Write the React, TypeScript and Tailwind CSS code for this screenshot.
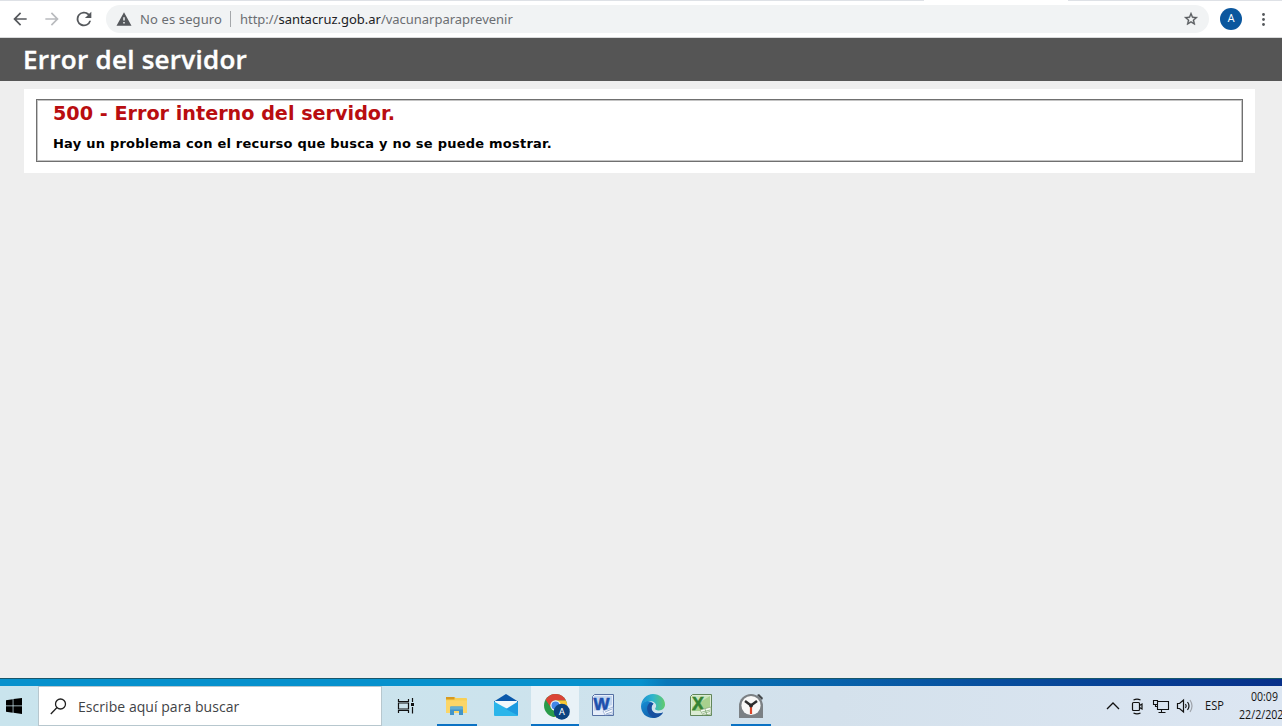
import type { ReactNode } from 'react'

function BrowserToolbar() {
  return (
    <div className="flex h-[38px] shrink-0 flex-col border-b border-[#d9dadb] bg-white">
      {/* Bottom edge of the tab strip, open under the active tab */}
      <div className="flex h-px shrink-0 justify-between">
        <div className="w-[924px] bg-[#dee1e6]" />
        <div className="w-[214px] bg-[#dee1e6]" />
      </div>
      <div className="flex h-9 items-center">
        <svg className="ml-[10px] size-5 shrink-0" viewBox="0 0 24 24" fill="#55585c">
          <path d="M20 11H7.8l5.6-5.6L12 4l-8 8 8 8 1.4-1.4L7.8 13H20z" />
        </svg>
        <svg className="ml-[12px] size-5 shrink-0" viewBox="0 0 24 24" fill="#b9bbbe">
          <path d="M4 11h12.2l-5.6-5.6L12 4l8 8-8 8-1.4-1.4 5.6-5.6H4z" />
        </svg>
        <svg className="ml-[11px] size-[22px] shrink-0" viewBox="0 0 24 24" fill="#55585c">
          <path d="M17.65 6.35A8 8 0 1 0 19.73 14h-2.08A6 6 0 1 1 12 6c1.66 0 3.14.69 4.22 1.78L13 11h7V4z" />
        </svg>
        <div className="ml-[11px] flex h-7 w-[1103px] shrink-0 items-center rounded-full bg-[#f1f3f4] font-['Noto_Sans',sans-serif] text-[13px] text-[#6b6e72]">
          <svg className="ml-[9px] size-[18px]" viewBox="0 0 24 24" fill="#55585c">
            <path d="M2 21h20L12 3zm11-3h-2v-2h2zm0-4h-2V9.5h2z" />
          </svg>
          <span className="ml-[7px] w-[83px] pt-px tracking-[.12px] whitespace-nowrap">No es seguro</span>
          <span className="ml-[7px] h-4 w-px bg-[#a4a7aa]" />
          <span className="ml-[9px] grow pt-px tracking-[-.02px] whitespace-nowrap">
            http://<span className="text-[#202124]">santacruz.gob.ar</span>/vacunarparaprevenir
          </span>
          <svg className="mr-[10px] size-4" viewBox="0 0 24 24" fill="#55585c" stroke="#55585c" strokeWidth=".5">
            <path d="M22 9.24l-7.19-.62L12 2 9.19 8.63 2 9.24l5.46 4.73L5.82 21 12 17.27 18.18 21l-1.63-7.03zM12 15.4l-3.76 2.27 1-4.28-3.32-2.88 4.38-.38L12 6.1l1.71 4.04 4.38.38-3.32 2.88 1 4.28z" />
          </svg>
        </div>
        <div className="ml-[11px] flex size-[22px] shrink-0 items-center justify-center rounded-full bg-[#0b579e] font-[Roboto,sans-serif] text-[11px] text-white">
          A
        </div>
        <svg className="ml-[19px] h-4 w-[5px] shrink-0" viewBox="0 0 5 16" fill="#55585c">
          <circle cx="2.5" cy="3.5" r="1.4" />
          <circle cx="2.5" cy="8.5" r="1.4" />
          <circle cx="2.5" cy="13.5" r="1.4" />
        </svg>
      </div>
    </div>
  )
}

function ErrorPage() {
  return (
    <main className="flex grow flex-col bg-[#eee] font-['DejaVu_Sans',sans-serif]">
      <h1 className="h-[43px] bg-[#555] pl-[23px] font-['Open_Sans',sans-serif] text-[26px] leading-[43px] font-semibold tracking-[.27px] text-white [-webkit-text-stroke:.4px_white]">
        Error del servidor
      </h1>
      <div className="mt-2 ml-6 h-[84px] w-[1231px] bg-white px-3 pt-[10px]">
        <div className="h-[63px] w-[1207px] border border-[#707070] pl-4 shadow-[inset_0_0_0_1px_#c4c4c4]">
          <h2 className="h-[28px] text-[19.2px] leading-[27px] font-bold whitespace-nowrap text-[#b90d10]">
            500 - Error interno del servidor.
          </h2>
          <h3 className="mt-[6px] text-[13px] leading-[20px] font-bold tracking-[.23px] whitespace-nowrap text-black">
            Hay un problema con el recurso que busca y no se puede mostrar.
          </h3>
        </div>
      </div>
    </main>
  )
}

function TaskButton({ open, active, children }: { open?: boolean; active?: boolean; children: ReactNode }) {
  return (
    <div className={`flex h-10 w-12 shrink-0 flex-col items-center ${active ? 'bg-[#e9f2f7]' : ''}`}>
      <div className="flex h-[38px] items-center justify-center">{children}</div>
      {open && <div className={`h-[2px] bg-[#0b72c4] ${active ? 'w-12' : 'w-10'}`} />}
    </div>
  )
}

function ExplorerIcon() {
  return (
    <svg className="mt-[2px] h-[22px] w-6" viewBox="0 0 24 22">
      <path d="M1 3a1 1 0 0 1 1-1h7l2 1h10a1 1 0 0 1 1 1v14H1z" fill="#f8cf55" />
      <path d="M1 2h8.5v2.5H1z" fill="#d89a20" />
      <path d="M1 5.5h21v12.5H1z" fill="#fbd668" />
      <path d="M5 20v-7.5a1 1 0 0 1 1-1h11a1 1 0 0 1 1 1V20h-4v-4H9v4z" fill="#4295c8" />
      <path d="M5 14.5h13v-2a1 1 0 0 0-1-1H6a1 1 0 0 0-1 1z" fill="#62afd4" />
    </svg>
  )
}

function MailIcon() {
  return (
    <svg className="h-[24px] w-[26px]" viewBox="0 0 26 24">
      <path d="M1 8.5L13 1l12 7.5v6H1z" fill="#0a58ab" />
      <path d="M2 8h22v3l-10 6L2 11z" fill="#f3f8fb" />
      <path d="M1 8.5L25 22a1 1 0 0 1-1 1H2a1 1 0 0 1-1-1z" fill="#2bb5ea" />
      <path d="M25 8.5v14L13 16z" fill="#1c9ae0" />
      <path d="M25 22.5L13 15.5l-3-2 .5.3z" fill="#1683d2" />
    </svg>
  )
}

function ChromeIcon() {
  return (
    <svg className="mt-[4px] ml-[3px] h-[28px] w-[28px]" viewBox="0 0 28 28">
      <circle cx="12.5" cy="12.5" r="11.5" fill="#299b4a" />
      <path d="M2.6 6.7A11.5 11.5 0 0 1 23 7.5H12.5a5 5 0 0 0-4.5 7z" fill="#db4437" />
      <path d="M12.5 7.5H23a11.5 11.5 0 0 1-11.5 16.5l5.5-9z" fill="#f8c935" />
      <circle cx="12.5" cy="12.5" r="5.2" fill="#f7f8f8" />
      <circle cx="12.5" cy="12.5" r="4" fill="#4285e8" />
      <circle cx="18.8" cy="18.7" r="8" fill="#0b4380" />
      <text x="18.8" y="22" textAnchor="middle" fontFamily="Roboto, sans-serif" fontSize="9.5" fill="#fff">A</text>
    </svg>
  )
}

function WordIcon() {
  return (
    <svg className="ml-[-2px] size-6" viewBox="0 0 24 24">
      <path d="M3.5 1.5h19v21h-21v-19z" fill="#e6eefa" stroke="#5570a3" />
      <path d="M3 3h18v9L3 18z" fill="#c2d5ef" />
      <text x="2.5" y="17" textLength="16" lengthAdjust="spacingAndGlyphs" fontFamily="Liberation Sans, sans-serif" fontSize="17" fontWeight="700" fill="#1d50ad" stroke="#1d50ad" strokeWidth=".6">W</text>
      <path d="M12 18l10-4v7l-8 1z" fill="#f7faff" stroke="#8ba4ce" strokeWidth=".7" />
      <path d="M14 19l7-3M15 21l6-2" stroke="#6f8fbd" strokeWidth=".7" />
    </svg>
  )
}

function EdgeIcon() {
  return (
    <svg className="mt-px size-[26px]" viewBox="0 0 26 26">
      <defs>
        <linearGradient id="edge-top" x1="0" x2="1">
          <stop offset="0" stopColor="#1b8fd4" />
          <stop offset=".5" stopColor="#2fb5cc" />
          <stop offset="1" stopColor="#62cb6b" />
        </linearGradient>
        <linearGradient id="edge-side" x1="0" x2="1" y1="0" y2="1">
          <stop offset="0" stopColor="#1690d5" />
          <stop offset="1" stopColor="#104d9c" />
        </linearGradient>
      </defs>
      <path d="M1 13c0 7 5 12 12 12 4.5 0 8-2.2 10-5.5-5.5 2.5-11.5.5-11.5-4.5 0-2 .8-3.3 2-4.3C9 6 2 8 1 13z" fill="url(#edge-side)" />
      <path d="M9.5 10C5 14 7 22 14 24.9c4-.3 7.2-2.4 9-5.4-5.5 2.5-11.5.5-11.5-4.5 0-2 .8-3.3 2-4.3-1-.9-2.8-1.2-4-.7z" fill="#174f9f" />
      <path d="M1 13C1.500 6 6.500 1 13 1s12 4.700 12 10.300c0 3.900-2.700 6.200-6 6.200-2.700 0-4.500-.9-3.700-2.200C18.300 11 13 7.200 8.700 8 5 8.600 2 10 1 13z" fill="url(#edge-top)" />
    </svg>
  )
}

function ExcelIcon() {
  return (
    <svg className="ml-[-2px] size-6" viewBox="0 0 24 24">
      <path d="M3.5 1.5h19v21h-21v-19z" fill="#dcecd4" stroke="#61865a" />
      <path d="M3 3h18v15H3z" fill="#a8d08e" />
      <path d="M3 3h18L3 14z" fill="#cbe5bc" />
      <text x="3" y="17" fontFamily="Liberation Sans, sans-serif" fontSize="18" fontWeight="700" fill="#348334" stroke="#348334" strokeWidth=".5">X</text>
      <path d="M11 17l11-3v7l-8 1z" fill="#f8fcf5" stroke="#85a578" strokeWidth=".7" />
      <path d="M13 19l8-2M14 20.5l7-2M16 16l2 6" stroke="#76a268" strokeWidth=".7" />
    </svg>
  )
}

function ClockIcon() {
  return (
    <svg className="mt-[2px] size-[26px]" viewBox="0 0 26 26">
      <path d="M1 25V13a12 12 0 0 1 24 0v12z" fill="#7b8084" />
      <path d="M19 2l2-1 4 4-1 2z" fill="#44484b" />
      <circle cx="13" cy="12.5" r="9.6" fill="#f8f8f7" />
      <path d="M13 13v8" stroke="#dc4528" strokeWidth="2.2" />
      <path d="M7 8l6 4.5 6-4.5" fill="none" stroke="#2d2d2d" strokeWidth="2.5" />
      <circle cx="13" cy="12.5" r="2" fill="#2d2d2d" />
    </svg>
  )
}

function SystemTray() {
  return (
    <div className="ml-auto flex h-10 w-[176px] shrink-0 items-center font-['Open_Sans',sans-serif] text-[12px] text-[#151515]">
      <svg className="h-2 w-[14px] shrink-0" viewBox="0 0 14 8" fill="none" stroke="#111" strokeWidth="1.3">
        <path d="M1 7l6-6 6 6" />
      </svg>
      <svg className="ml-[10px] h-[17px] w-[15px] shrink-0" viewBox="0 0 15 17" fill="none" stroke="#111" strokeWidth="1.2">
        <rect x="2.5" y="4.5" width="7" height="8" rx="1" />
        <path d="M9.5 7.5l2.5-1.5v5l-2.5-1.5M3.5 2Q7 .2 10.5 2M3.5 15q3.5 1.8 7 0" />
      </svg>
      <svg className="ml-[7px] h-[17px] w-[18px] shrink-0" viewBox="0 0 18 17" fill="none" stroke="#111" strokeWidth="1.1">
        <path d="M5.5 3.5h11v8h-11V7M9.5 11.5v3M6.5 14.5h7M1.5 2.5h4v4h-4zM3.5 6.5v2h2" />
      </svg>
      <svg className="ml-[6px] h-[16px] w-[18px] shrink-0" viewBox="0 0 18 16" fill="none" stroke="#111" strokeWidth="1.2">
        <path d="M1.5 5.5h2L7.5 2v12l-4-3.5h-2zM9.5 6q1.5 2 0 4M11.5 4q3 4 0 8" />
        <path d="M14 2q4 6 0 12" stroke="#9ea3aa" />
      </svg>
      <span className="ml-[11px] w-[19px] origin-left scale-x-[.92] whitespace-nowrap">ESP</span>
      <div className="ml-[15px] flex w-[43px] shrink-0 flex-col items-start text-[12px] leading-[18px] whitespace-nowrap">
        <span className="ml-3 origin-left scale-x-[.88]">00:09</span>
        <span className="origin-left scale-x-[.89]">22/2/202</span>
      </div>
    </div>
  )
}

function Taskbar() {
  return (
    <div className="flex h-[48px] shrink-0 flex-col">
      {/* Strip of wallpaper showing below the window */}
      <div className="h-[8px] border-t border-[#17566b] bg-[linear-gradient(90deg,#0791cd_0%,#0791cd_50%,#0878b9_52%,#07509f_76%,#07308a_100%)]" />
      <div className="flex h-10 items-center bg-[linear-gradient(90deg,#c9e4ed_0%,#cce3ed_40%,#d4e1ec_65%,#dce6f2_100%)]">
        <svg className="ml-[6px] size-4 shrink-0" viewBox="0 0 16 16">
          <path d="M0 2.2l6.7-1v6.3H0zm7.4-1.1L16 0v7.5H7.4zM0 8.3h6.7v6.4l-6.7-1zm7.4 0H16V16l-8.6-1.2z" />
        </svg>
        <div className="ml-4 flex h-10 w-[344px] shrink-0 items-center border border-[#b7c7ce] bg-white font-['Open_Sans',sans-serif] text-[14px] text-[#3f4346]">
          <svg className="ml-[11px] size-[17px]" viewBox="0 0 17 17" fill="none" stroke="#202020" strokeWidth="1.3">
            <circle cx="10.5" cy="6" r="5" />
            <path d="M7 9.5L.8 16" />
          </svg>
          <span className="ml-[11px] tracking-[.05px] whitespace-nowrap">Escribe aquí para buscar</span>
        </div>
        <svg className="ml-[15px] h-4 w-[18px] shrink-0" viewBox="0 0 18 16" fill="none" stroke="#111" strokeWidth="1.2">
          <path d="M1.5 1v2.5h10V1M1.5 15v-2.5h10V15M1.5 5h10v6h-10zM15.5 0v4M15.5 9v6.5" />
          <path d="M14 5h3v3h-3z" fill="#111" stroke="none" />
        </svg>
        <div className="ml-[18px] flex gap-px">
          <TaskButton open><ExplorerIcon /></TaskButton>
          <TaskButton><MailIcon /></TaskButton>
          <TaskButton open active><ChromeIcon /></TaskButton>
          <TaskButton><WordIcon /></TaskButton>
          <TaskButton><EdgeIcon /></TaskButton>
          <TaskButton><ExcelIcon /></TaskButton>
          <TaskButton open><ClockIcon /></TaskButton>
        </div>
        <SystemTray />
      </div>
    </div>
  )
}

export default function App() {
  return (
    <div className="flex h-[726px] w-[1282px] flex-col overflow-hidden">
      <BrowserToolbar />
      <ErrorPage />
      <Taskbar />
    </div>
  )
}
